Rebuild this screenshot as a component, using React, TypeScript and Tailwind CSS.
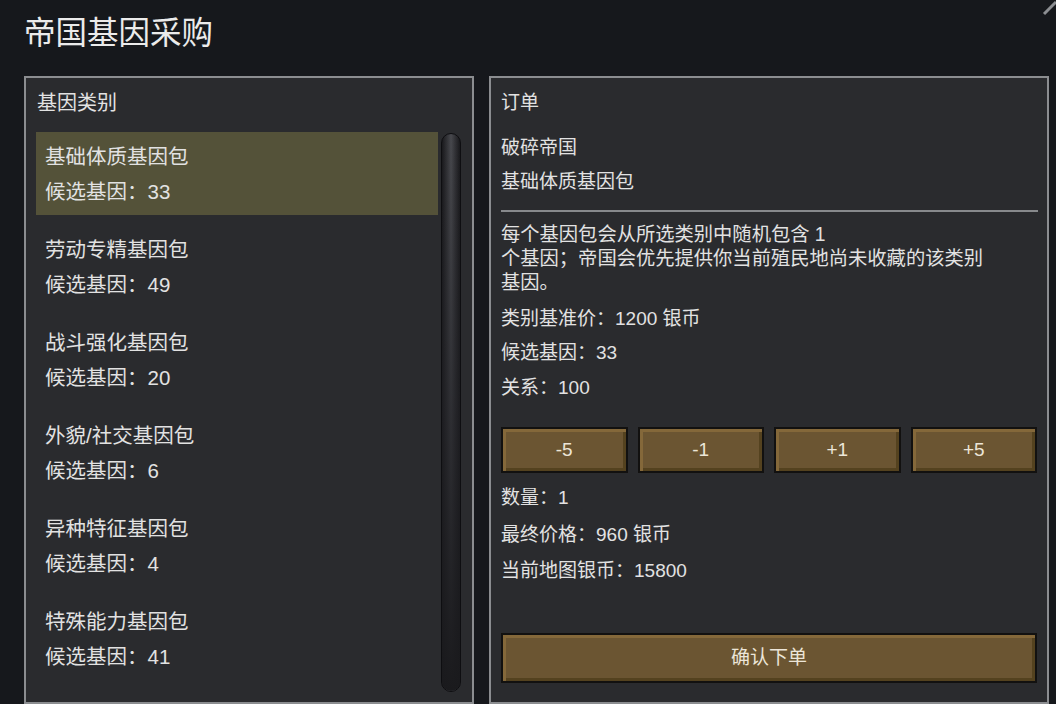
import React from 'react';

const categories = [
  { name: '基础体质基因包', count: 33 },
  { name: '劳动专精基因包', count: 49 },
  { name: '战斗强化基因包', count: 20 },
  { name: '外貌/社交基因包', count: 6 },
  { name: '异种特征基因包', count: 4 },
  { name: '特殊能力基因包', count: 41 },
];

const steps = ['-5', '-1', '+1', '+5'];

function WoodButton({ label, className }: { label: string; className: string }) {
  return (
    <button
      className={`flex items-center justify-center border-2 border-[#121110] bg-[#6b5532] text-[19px] text-[#ece5d8] shadow-[inset_3px_3px_0_#84683a,inset_-3px_-3px_0_#54421f] ${className}`}
    >
      {label}
    </button>
  );
}

export default function App() {
  return (
    <div
      className="relative h-[704px] w-[1056px] overflow-hidden bg-[#16181c] pl-[24px] text-[#e2e2e2]"
      style={{ fontFamily: '"Liberation Sans", "Noto Sans CJK SC", sans-serif' }}
    >
      {/* resize grip */}
      <svg className="absolute right-0 top-0" width="14" height="16" viewBox="0 0 14 16">
        <line x1="2" y1="14" x2="14" y2="2" stroke="#8c8e92" strokeWidth="3" />
      </svg>

      {/* TITLE */}
      <h1 className="pt-[13px] text-[31.5px] leading-[40px] text-[#ebebeb]">帝国基因采购</h1>

      <div className="mt-[23px] flex gap-[15px]">
        {/* LEFT PANEL */}
        <div className="h-[628px] w-[450px] border-2 border-[#8b8d90] bg-[#2a2b2e] pl-[10px] pr-[11px] pt-[14px]">
          <div className="pl-[1px] text-[20px] leading-[22px]">基因类别</div>

          <div className="mt-[18px] flex gap-[3px]">
            <div className="flex h-[560px] w-[402px] flex-col gap-[10px] overflow-hidden">
              {categories.map((c, i) => (
                <div
                  key={c.name}
                  className={`flex h-[83px] shrink-0 flex-col gap-[5px] pl-[9px] pt-[10px] text-[20.5px] leading-[30px] ${
                    i === 0 ? 'bg-[#545239]' : ''
                  }`}
                >
                  <div>{c.name}</div>
                  <div>候选基因：{c.count}</div>
                </div>
              ))}
            </div>

            {/* SCROLLBAR */}
            <div className="relative mt-[1px] h-[559px] w-[20px] overflow-hidden rounded-full border border-[#0e0e11] bg-gradient-to-r from-[#19191c] via-[#48494e] to-[#19191c]">
              <div className="absolute inset-0 bg-gradient-to-b from-transparent via-[#1e1e22]/60 to-[#1a1a1d]" />
            </div>
          </div>
        </div>

        {/* RIGHT PANEL */}
        <div className="flex h-[628px] w-[560px] flex-col border-2 border-[#8b8d90] bg-[#2a2b2e] px-[10px] pt-[14px] text-[19px]">
          <div className="leading-[22px]">订单</div>

          <div className="mt-[19px] leading-[30px]">破碎帝国</div>
          <div className="mt-[4px] leading-[30px]">基础体质基因包</div>

          <div className="mt-[13px] h-[2px] w-[537px] bg-[#87898c]" />

          <p className="mt-[11px] text-[19.3px] leading-[24px]">
            每个基因包会从所选类别中随机包含 1
            <br />
            个基因；帝国会优先提供你当前殖民地尚未收藏的该类别
            <br />
            基因。
          </p>

          <div className="mt-[9px] leading-[30px]">类别基准价：1200 银币</div>
          <div className="mt-[4px] leading-[30px]">候选基因：33</div>
          <div className="mt-[5px] leading-[30px]">关系：100</div>

          <div className="mt-[24px] flex gap-[10px]">
            {steps.map((s) => (
              <WoodButton key={s} label={s} className="h-[46px] w-[127px]" />
            ))}
          </div>

          <div className="mt-[10px] leading-[30px]">数量：1</div>
          <div className="mt-[7px] leading-[30px]">最终价格：960 银币</div>
          <div className="mt-[6px] leading-[30px]">当前地图银币：15800</div>

          <WoodButton label="确认下单" className="mt-[47px] h-[50px] w-[536px]" />
        </div>
      </div>
    </div>
  );
}
